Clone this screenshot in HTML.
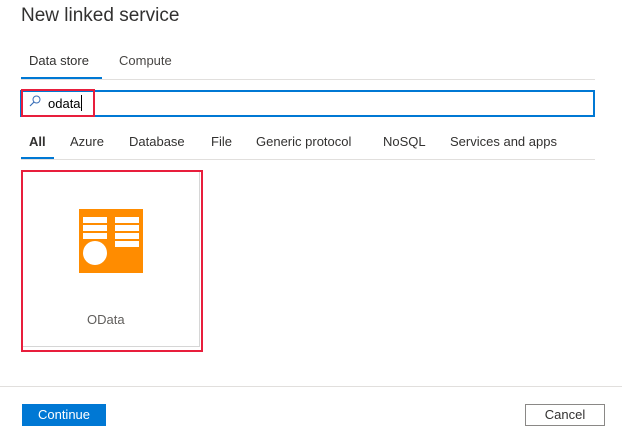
<!DOCTYPE html>
<html><head><style>
body{margin:0;width:622px;height:436px;background:#fff;font-family:"Liberation Sans",sans-serif;color:#323130;position:relative;overflow:hidden}
.a{position:absolute}
</style></head><body>
<div class="a" style="left:21px;top:5px;font-size:19px;color:#323130">New linked service</div>
<div class="a" style="left:29px;top:53px;font-size:13px;color:#323130">Data store</div>
<div class="a" style="left:119px;top:53px;font-size:13px;color:#484644">Compute</div>
<div class="a" style="left:21px;top:79px;width:574px;height:1px;background:#e1dfdd"></div>
<div class="a" style="left:21px;top:77px;width:81px;height:2px;background:#0078d4"></div>
<div class="a" style="left:20px;top:90px;width:571px;height:23px;border:2px solid #0078d4"></div>
<div class="a" style="left:21px;top:89px;width:70px;height:24px;border:2px solid #e81e3c"></div>
<svg class="a" style="left:29px;top:95px" width="12" height="12" viewBox="0 0 12 12"><circle cx="7.5" cy="4.5" r="3.5" fill="none" stroke="#3a6fb8" stroke-width="1"/><path d="M5 7 L1 11" stroke="#3a6fb8" stroke-width="1.2"/></svg>
<div class="a" style="left:48px;top:96px;font-size:13px;color:#000">odata</div>
<div class="a" style="left:81px;top:95px;width:1px;height:16px;background:#000"></div>
<div class="a" style="left:29px;top:134px;font-size:13px;font-weight:bold">All</div>
<div class="a" style="left:70px;top:134px;font-size:13px">Azure</div>
<div class="a" style="left:129px;top:134px;font-size:13px">Database</div>
<div class="a" style="left:211px;top:134px;font-size:13px">File</div>
<div class="a" style="left:256px;top:134px;font-size:13px">Generic protocol</div>
<div class="a" style="left:383px;top:134px;font-size:13px">NoSQL</div>
<div class="a" style="left:450px;top:134px;font-size:13px">Services and apps</div>
<div class="a" style="left:21px;top:159px;width:574px;height:1px;background:#e1dfdd"></div>
<div class="a" style="left:21px;top:157px;width:33px;height:2px;background:#0078d4"></div>
<div class="a" style="left:21px;top:170px;width:178px;height:178px;border:2px solid #e81e3c"></div>
<div class="a" style="left:23px;top:172px;width:176px;height:174px;border:1px solid #d6d6d6;border-top:none;border-left:none"></div>
<svg class="a" style="left:79px;top:209px" width="64" height="64" viewBox="0 0 64 64"><rect width="64" height="64" fill="#ff8c00"/><g fill="#fff"><rect x="4" y="8" width="24" height="6"/><rect x="4" y="16" width="24" height="6"/><rect x="4" y="24" width="24" height="6"/><rect x="36" y="8" width="24" height="6"/><rect x="36" y="16" width="24" height="6"/><rect x="36" y="24" width="24" height="6"/><rect x="36" y="32" width="24" height="6"/><circle cx="16" cy="44" r="12"/></g></svg>
<div class="a" style="left:87px;top:312px;font-size:13px;color:#605e5c">OData</div>
<div class="a" style="left:0;top:386px;width:622px;height:1px;background:#e1dfdd"></div>
<div class="a" style="left:22px;top:404px;width:84px;height:22px;background:#0078d4;color:#fff;font-size:13px;text-align:center;line-height:22px">Continue</div>
<div class="a" style="left:525px;top:404px;width:78px;height:20px;border:1px solid #8a8886;font-size:13px;text-align:center;line-height:20px">Cancel</div>
</body></html>
